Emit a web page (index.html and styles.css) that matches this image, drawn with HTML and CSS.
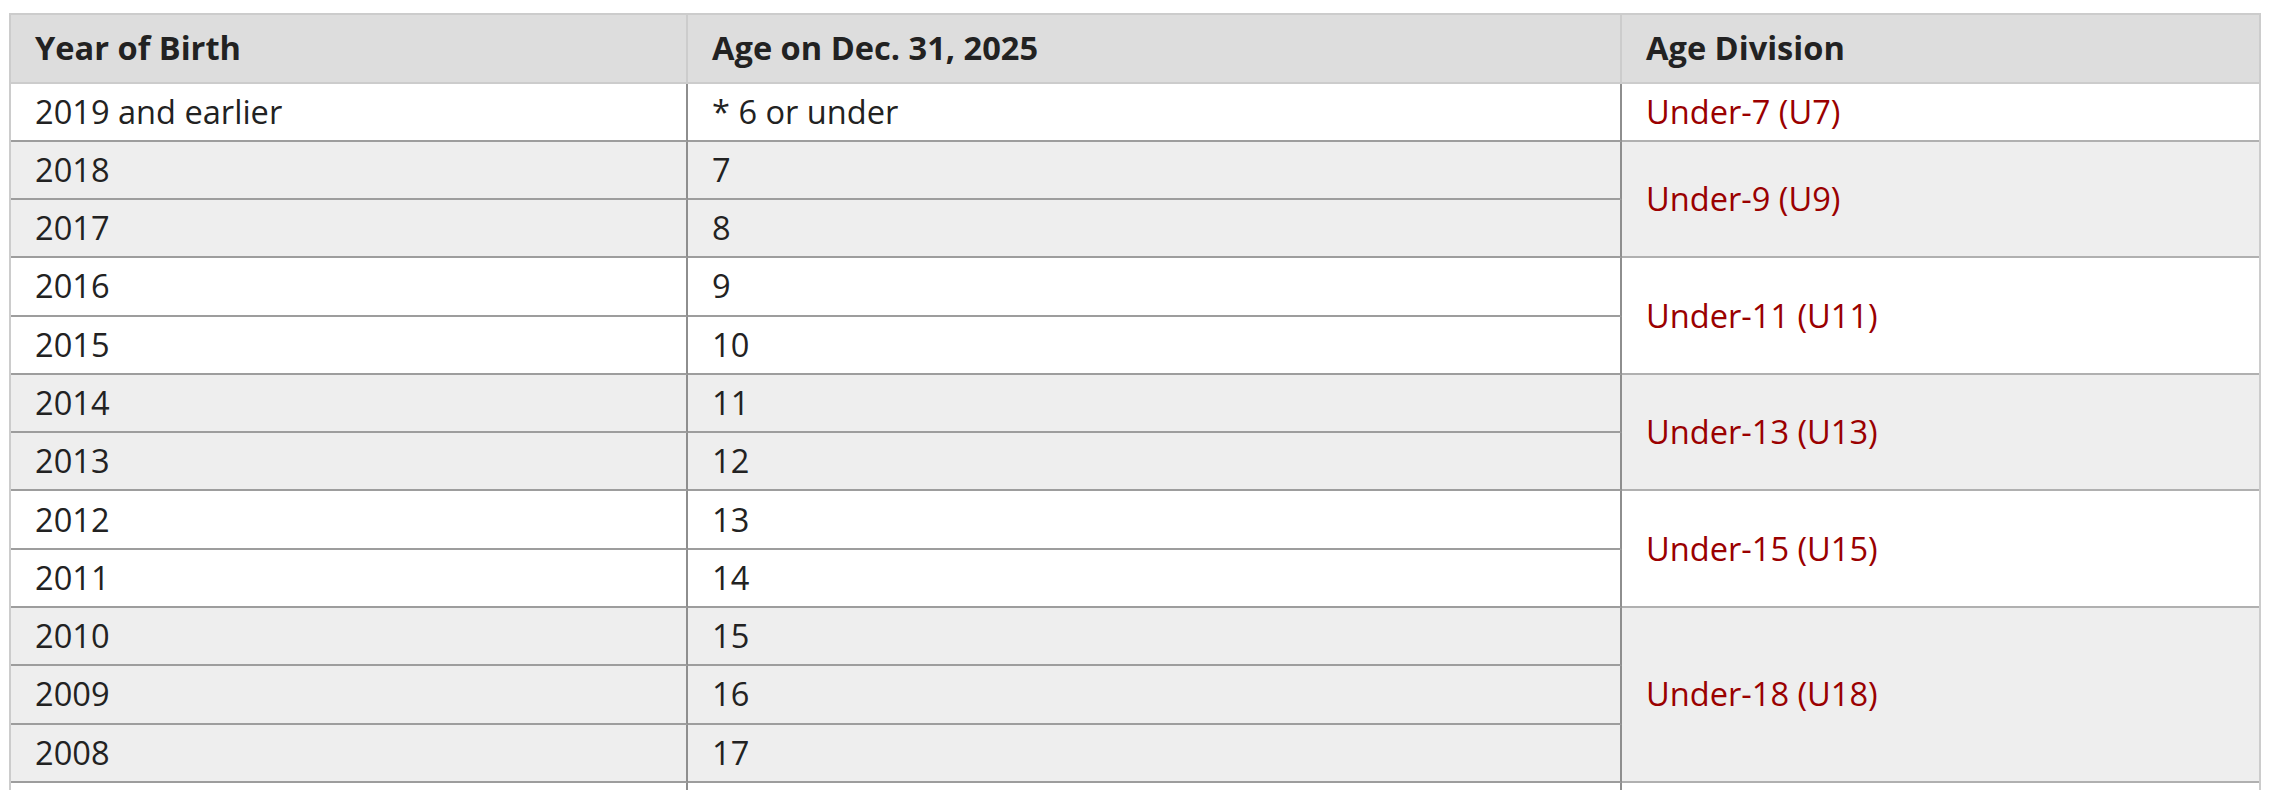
FILE: index.html
```html
<!DOCTYPE html>
<html lang="en">
<head>
<meta charset="utf-8">
<title>Age Divisions</title>
<link rel="stylesheet" href="styles.css">
</head>
<body>
<div class="wrap">
<table class="ages">
  <colgroup>
    <col class="c1">
    <col class="c2">
    <col class="c3">
  </colgroup>
  <thead>
    <tr>
      <th>Year of Birth</th>
      <th>Age on Dec. 31, 2025</th>
      <th class="last">Age Division</th>
    </tr>
  </thead>
  <tbody>
    <tr class="w">
      <td>2019 and earlier</td>
      <td>* 6 or under</td>
      <td class="div last">Under-7 (U7)</td>
    </tr>
    <tr class="g">
      <td>2018</td>
      <td>7</td>
      <td class="div last" rowspan="2">Under-9 (U9)</td>
    </tr>
    <tr class="g">
      <td>2017</td>
      <td>8</td>
    </tr>
    <tr class="w">
      <td>2016</td>
      <td>9</td>
      <td class="div last" rowspan="2">Under-11 (U11)</td>
    </tr>
    <tr class="w">
      <td>2015</td>
      <td>10</td>
    </tr>
    <tr class="g">
      <td>2014</td>
      <td>11</td>
      <td class="div last" rowspan="2">Under-13 (U13)</td>
    </tr>
    <tr class="g">
      <td>2013</td>
      <td>12</td>
    </tr>
    <tr class="w">
      <td>2012</td>
      <td>13</td>
      <td class="div last" rowspan="2">Under-15 (U15)</td>
    </tr>
    <tr class="w">
      <td>2011</td>
      <td>14</td>
    </tr>
    <tr class="g">
      <td>2010</td>
      <td>15</td>
      <td class="div last" rowspan="3">Under-18 (U18)</td>
    </tr>
    <tr class="g">
      <td>2009</td>
      <td>16</td>
    </tr>
    <tr class="g">
      <td>2008</td>
      <td>17</td>
    </tr>
    <tr class="w">
      <td>&nbsp;</td>
      <td>&nbsp;</td>
      <td class="last">&nbsp;</td>
    </tr>
  </tbody>
</table>
</div>
</body>
</html>
```

FILE: styles.css
```css
html, body {
  margin: 0;
  padding: 0;
  background: #ffffff;
}

.wrap {
  padding: 13px 12px 0 9px;
}

.ages {
  width: 2252px;
  table-layout: fixed;
  border-collapse: separate;
  border-spacing: 0;
  border-top: 2px solid #cccccc;
  border-left: 2px solid #cccccc;
  border-right: 2px solid #cccccc;
  font-family: "Open Sans", "Liberation Sans", sans-serif;
  font-size: 32.6px;
  color: #222222;
}

.c1 { width: 677px; }
.c2 { width: 934px; }
.c3 { width: 637px; }

.ages th {
  background: #dddddd;
  font-weight: 700;
  text-align: left;
  line-height: 48px;
  padding: 9px 24px 9.5px;
  border-bottom: 2px solid #cccccc;
  border-right: 2px solid #cccccc;
}

.ages td {
  line-height: 48px;
  padding: 4.1px 24px 4.2px;
  border-bottom: 2px solid #9d9d9d;
  border-right: 2px solid #8e8e8e;
  vertical-align: middle;
  white-space: nowrap;
}

.ages .last {
  border-right: none;
}

.ages td.last {
  border-bottom-color: #b0b0b0;
}

.ages tr.w td { background: #ffffff; }
.ages tr.g td { background: #eeeeee; }

.ages td.div {
  color: #9a0000;
}
```
